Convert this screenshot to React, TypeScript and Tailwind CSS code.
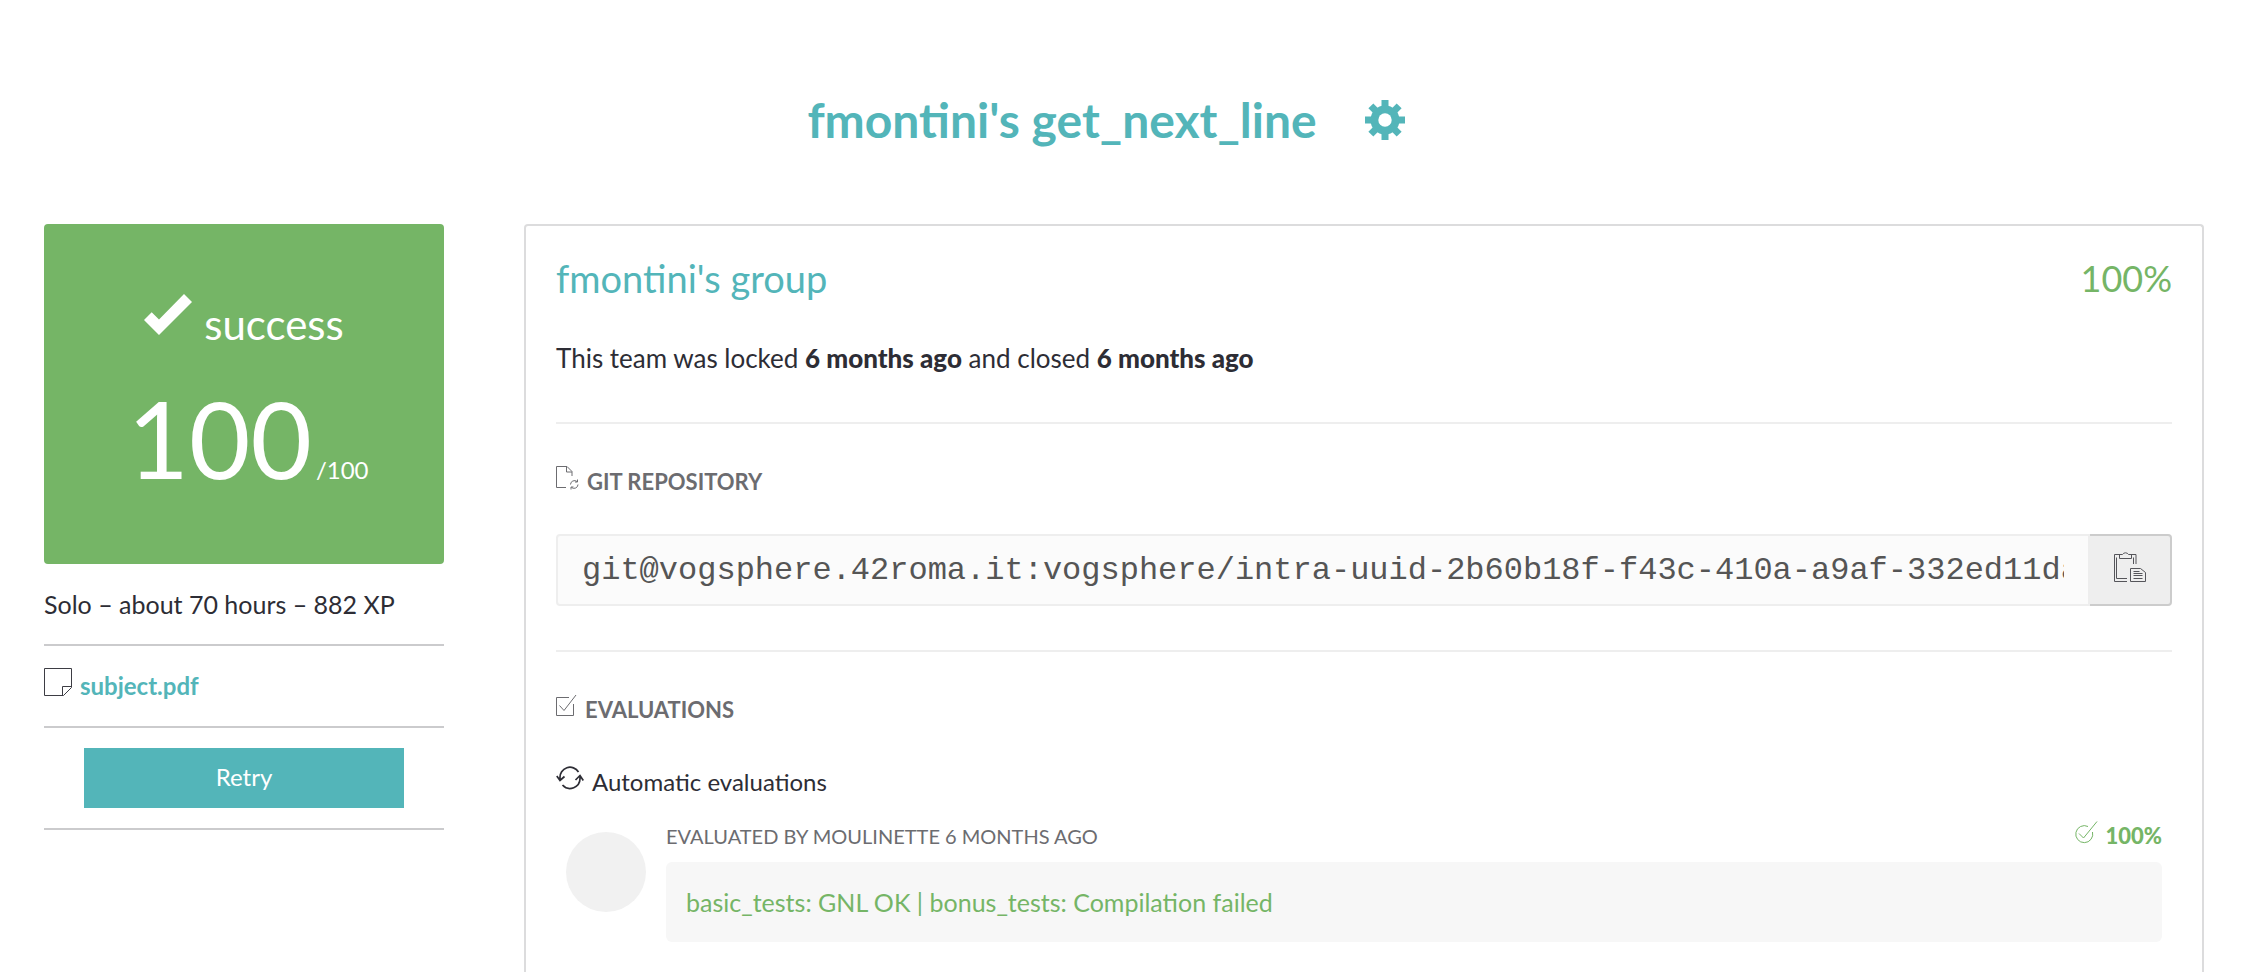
import type { ReactNode } from "react";

const REPO =
  "git@vogsphere.42roma.it:vogsphere/intra-uuid-2b60b18f-f43c-410a-a9af-332ed11da0c4-4080126-fmontini";

function Gear() {
  const teeth = [0, 45, 90, 135];
  return (
    <svg className="size-10" viewBox="0 0 40 40" fill="currentColor" aria-hidden="true">
      <mask id="gear-hole">
        <rect width="40" height="40" fill="#fff" />
        <circle cx="20" cy="20" r="6.7" fill="#000" />
      </mask>
      <g mask="url(#gear-hole)">
        <circle cx="20" cy="20" r="14.5" />
        {teeth.map((a) => (
          <rect key={a} x="16.5" y="0" width="7" height="40" transform={`rotate(${a} 20 20)`} />
        ))}
      </g>
    </svg>
  );
}

function Tick() {
  return (
    <svg className="h-[41px] w-12" viewBox="0 0 48 41" fill="currentColor" aria-hidden="true">
      <path d="M0 26 7.7 18.2 15 25.5 40 0 48 8 15 41Z" />
    </svg>
  );
}

function Note() {
  return (
    <svg className="size-7" viewBox="0 0 28 28" fill="none" stroke="#3d3d44" aria-hidden="true">
      <path d="M.5.5h27v19l-8 8H.5Z" />
      <path d="M27.5 18.5h-9v9" />
    </svg>
  );
}

function FileSync() {
  return (
    <svg className="h-6 w-[23px]" viewBox="0 0 23 24" fill="none" stroke="#6c6c70" aria-hidden="true">
      <path d="M10 21.5H.5V.5H11l5 5V10M10.5.5v5.500H16" />
      <path d="M14.500 18.500a4 4 0 0 1 6.500-3M22 18.500a4 4 0 0 1-6.500 3M21.500 13.500v2.500h-2.500M15 23.500v-2.500h2.500" />
    </svg>
  );
}

function CheckBox() {
  return (
    <svg className="h-6 w-[21px]" viewBox="0 0 21 24" fill="none" stroke="#6c6c70" aria-hidden="true">
      <path d="M13 3.500H.5v18h17V10" />
      <path d="M3.500 11.500 8 16.500 20 1" />
    </svg>
  );
}

function Sync() {
  return (
    <svg className="h-6 w-7" viewBox="0 0 28 24" fill="none" stroke="#2d2d35" strokeWidth="1.700" aria-hidden="true">
      <path d="M4 14.500V12A10 10 0 0 1 22.500 6M.8 10 4 14.500l4.500-4" />
      <path d="M24 9.500v2.500A10 10 0 0 1 6.500 19M19.500 14 24 9.500l3.300 5" />
    </svg>
  );
}

function Clipboard() {
  return (
    <svg className="size-8" viewBox="0 0 32 32" fill="none" stroke="#55555a" aria-hidden="true">
      <path d="M13 31.500H.5v-27H6M16 4.500h6V14M13 28.500H2.500V7.500M19.500 14V7.500" />
      <path d="M5.500 8.500v-4h3a3.500 3.500 0 0 1 6 0h3v4Z" />
      <path d="M16.500 18.500h10l5 4v9h-15Z" />
      <path d="M19.500 21.500h6M19.500 23.500h9M19.500 25.500h9M19.500 28.500h9" />
    </svg>
  );
}

function RoundCheck() {
  return (
    <svg className="h-6 w-[23px]" viewBox="0 0 23 24" fill="none" stroke="#75b566" aria-hidden="true">
      <path d="M13 6.500A8.500 8.500 0 1 0 17.500 12" />
      <path d="M4 13.500 8.500 18 22 1.500" />
    </svg>
  );
}

function SectionTitle({ icon, children }: { icon: ReactNode; children: ReactNode }) {
  return (
    <h4 className="flex items-start gap-2 text-[22px] leading-8 font-bold text-[#6c6c70] uppercase">
      {icon}
      <span>{children}</span>
    </h4>
  );
}

function Summary() {
  return (
    <aside className="w-[400px] shrink-0 text-[25px] leading-8 text-[#2d2d35]">
      <div className="flex h-[340px] flex-col items-center rounded bg-[#75b566] pt-[70px] text-white">
        <div className="flex items-start gap-3">
          <Tick />
          <span className="pt-2 text-[42px] leading-11">success</span>
        </div>
        <div className="flex items-baseline gap-1 pt-8 pl-2">
          <span className="text-[106px] leading-[120px]">100</span>
          <span className="text-2xl">/100</span>
        </div>
      </div>
      <p className="py-6">Solo – about 70 hours – 882 XP</p>
      <div className="flex items-start gap-2 border-t-2 border-[#cbcbcd] pt-[22px] pb-6">
        <Note />
        <a href="#subject" className="pt-0.5 text-2xl leading-8 font-bold text-[#53b5b9]">
          subject.pdf
        </a>
      </div>
      <div className="border-y-2 border-[#cbcbcd] px-10 py-5">
        <button type="button" className="block h-15 w-full bg-[#53b5b9] pb-0.5 text-2xl text-white">
          Retry
        </button>
      </div>
    </aside>
  );
}

function Team() {
  return (
    <main className="min-w-0 grow rounded-t border-2 border-b-0 border-[#dcdcdd] px-[30px] pt-7 pb-8 text-[25px] leading-8 text-[#2d2d35]">
      <div className="flex justify-between leading-12">
        <h3 className="text-[38px] text-[#53b5b9]">fmontini's group</h3>
        <span className="text-[36px] text-[#75b566]">100%</span>
      </div>
      <p className="pt-10 pb-1 text-[26px] leading-8">
        This team was locked <b className="font-black">6 months ago</b> and closed{" "}
        <b className="font-black">6 months ago</b>
      </p>
      <hr className="mt-11 mb-[42px] border-t-2 border-[#eeeeee]" />
      <SectionTitle icon={<FileSync />}>Git repository</SectionTitle>
      <div className="flex pt-9">
        <input
          aria-label="Git repository URL"
          readOnly
          value={REPO}
          className="h-18 min-w-0 grow rounded-l border-2 border-[#eeeeee] bg-[#fbfbfb] px-6 font-['Liberation_Mono',monospace] text-[32px] text-[#555555] outline-none"
        />
        <button
          type="button"
          aria-label="Copy"
          className="flex w-[82px] items-center justify-center rounded-r border-2 border-l-0 border-[#cccccc] bg-[#eeeeee] pb-2"
        >
          <Clipboard />
        </button>
      </div>
      <hr className="mt-11 mb-[42px] border-t-2 border-[#eeeeee]" />
      <SectionTitle icon={<CheckBox />}>Evaluations</SectionTitle>
      <h5 className="flex items-start gap-2 pt-10 text-2xl leading-8">
        <Sync />
        <span>Automatic evaluations</span>
      </h5>
      <div className="flex gap-5 px-[10px] pt-[22px]">
        <div className="mt-3 size-20 shrink-0 rounded-full bg-[#f1f1f1]" />
        <div className="grow">
          <div className="flex justify-between text-[#6c6c70]">
            <span className="text-xl leading-8 uppercase">Evaluated by moulinette 6 months ago</span>
            <span className="flex gap-2 text-[22px] font-black text-[#75b566]">
              <RoundCheck />
              100%
            </span>
          </div>
          <p className="mt-[10px] rounded-md bg-[#f7f7f7] px-5 py-6 text-[#75b566]">
            basic_tests: GNL OK | bonus_tests: Compilation failed
          </p>
        </div>
      </div>
    </main>
  );
}

export default function App() {
  return (
    <div className="h-screen overflow-hidden bg-white font-['Lato','Liberation_Sans',sans-serif]">
      <header className="flex items-center justify-center gap-12 pt-[88px] pr-8 pb-[72px] text-[#53b5b9]">
        <h1 className="text-5xl leading-16 font-bold">fmontini's get_next_line</h1>
        <button type="button" aria-label="Settings">
          <Gear />
        </button>
      </header>
      <div className="flex gap-20 pr-10 pl-11">
        <Summary />
        <Team />
      </div>
    </div>
  );
}
